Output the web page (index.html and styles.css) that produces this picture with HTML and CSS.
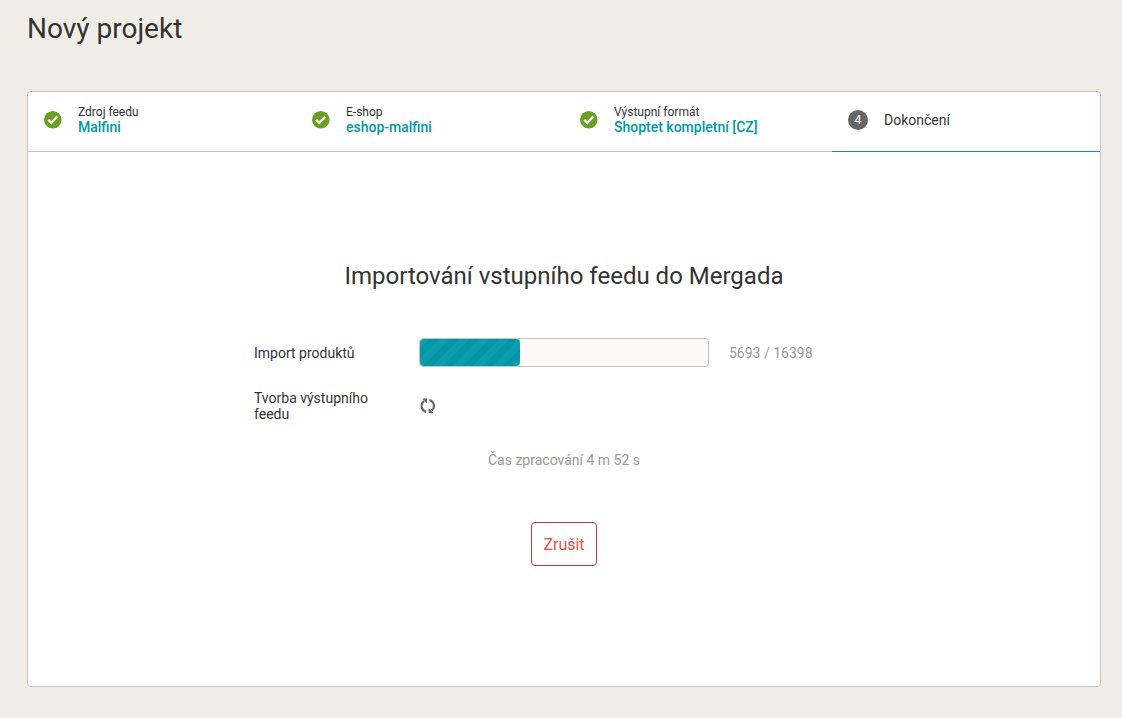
FILE: index.html
```
<!DOCTYPE html>
<html lang="cs">
<head>
    <meta charset="UTF-8">
    <meta name="viewport" content="width=device-width, initial-scale=1.0">
    <title>Nový projekt</title>
    <link rel="stylesheet" href="styles.css">
</head>
<body>
    <h1>Nový projekt</h1>

    <main class="card">
        <ol class="steps">
            <li class="step">
                <svg class="step-icon" viewBox="0 0 18 18" aria-hidden="true">
                    <circle cx="8.8" cy="8.8" r="8.8" fill="#699f23"/>
                    <path d="M4.2 8.8l3 3 6.2-6.2" fill="none" stroke="#fff" stroke-width="2.3"/>
                </svg>
                <div>
                    <div class="step-label">Zdroj feedu</div>
                    <a class="step-link" href="#">Malfini</a>
                </div>
            </li>
            <li class="step">
                <svg class="step-icon" viewBox="0 0 18 18" aria-hidden="true">
                    <circle cx="8.8" cy="8.8" r="8.8" fill="#699f23"/>
                    <path d="M4.2 8.8l3 3 6.2-6.2" fill="none" stroke="#fff" stroke-width="2.3"/>
                </svg>
                <div>
                    <div class="step-label">E-shop</div>
                    <a class="step-link" href="#">eshop-malfini</a>
                </div>
            </li>
            <li class="step">
                <svg class="step-icon" viewBox="0 0 18 18" aria-hidden="true">
                    <circle cx="8.8" cy="8.8" r="8.8" fill="#699f23"/>
                    <path d="M4.2 8.8l3 3 6.2-6.2" fill="none" stroke="#fff" stroke-width="2.3"/>
                </svg>
                <div>
                    <div class="step-label">Výstupní formát</div>
                    <a class="step-link" href="#">Shoptet kompletní [CZ]</a>
                </div>
            </li>
            <li class="step active" aria-current="step">
                <span class="step-number">4</span>
                <span>Dokončení</span>
            </li>
        </ol>

        <section class="import">
            <h2>Importování vstupního feedu do Mergada</h2>

            <div class="row">
                <div id="importLabel">Import produktů</div>
                <div class="progress" role="progressbar" aria-labelledby="importLabel" aria-valuemin="0" aria-valuemax="16398" aria-valuenow="5693">
                    <div class="progress-bar" style="width: 34.72%"></div>
                </div>
                <div class="muted">5693 / 16398</div>
            </div>

            <div class="row">
                <div>Tvorba výstupního feedu</div>
                <svg class="refresh" viewBox="0 0 16 16" aria-hidden="true">
                    <path d="M7.2 13.9A6.1 6.1 0 0 1 5 3.2M10.4 1.9A6.1 6.1 0 0 1 12.6 12.6" fill="none" stroke="#666" stroke-width="2.1"/>
                    <path d="M3 .6H8v5zM14.6 15.2h-5v-5z" fill="#666"/>
                </svg>
            </div>

            <p class="time muted">Čas zpracování 4 m 52 s</p>

            <button type="button" class="cancel">Zrušit</button>
        </section>
    </main>
</body>
</html>
```
FILE: styles.css
```
* {
    box-sizing: border-box;
}
body {
    display: flex;
    flex-direction: column;
    min-height: 100vh;
    margin: 0;
    padding: 13px 21px 31px 27px;
    font-family: Roboto, sans-serif;
    font-size: 14px;
    line-height: 16px;
    background: #f0ede6;
    color: #333;
}
h1 {
    margin: 0 0 46px;
    font-size: 28px;
    line-height: 32px;
    font-weight: 400;
}
.card {
    flex: 1;
    background: #fff;
    border: 1px solid #c9c3bd;
    border-radius: 4px;
}
.steps {
    display: grid;
    grid-template-columns: repeat(4, 1fr);
    margin: 0;
    padding: 0;
    list-style: none;
}
.step {
    display: flex;
    align-items: center;
    gap: 16px;
    height: 60px;
    padding: 0 16px 4px;
    border-bottom: 1px solid #c9c3bd;
}
.step.active {
    border-bottom-color: #0099a8;
}
.step-icon {
    width: 18px;
    height: 18px;
}
.step-label {
    font-size: 12px;
    line-height: 14px;
}
.step-link {
    display: block;
    color: #0099a8;
    font-weight: 500;
    text-decoration: none;
}
.step-number {
    width: 20px;
    height: 20px;
    border-radius: 50%;
    background: #666;
    color: #fff;
    font-size: 13px;
    line-height: 20px;
    text-align: center;
}
.import {
    display: flex;
    flex-direction: column;
    align-items: center;
    padding: 108px 20px 120px;
}
h2 {
    margin: 0 0 46px;
    font-size: 24px;
    line-height: 32px;
    font-weight: 400;
}
.row {
    display: grid;
    grid-template-columns: 145px 290px 145px;
    column-gap: 20px;
    align-items: center;
    margin-bottom: 23px;
}
.progress {
    height: 29px;
    border: 1px solid #c9c3bd;
    border-radius: 4px;
    background: #fbfaf8;
}
.progress-bar {
    height: 100%;
    border-radius: 4px;
    background-color: #0097a6;
    background-image: linear-gradient(135deg, rgba(255, 255, 255, 0.05) 25%, transparent 25%, transparent 50%, rgba(255, 255, 255, 0.05) 50%, rgba(255, 255, 255, 0.05) 75%, transparent 75%);
    background-size: 20px 20px;
}
.muted {
    color: #999;
}
.refresh {
    width: 16px;
    height: 16px;
}
.time {
    margin: 7px 0 54px;
}
.cancel {
    height: 44px;
    padding: 0 11px;
    border: 1px solid #c9393d;
    border-radius: 4px;
    background: #fff;
    color: #f04e4b;
    font-family: inherit;
    font-size: 16px;
    cursor: pointer;
}
```
